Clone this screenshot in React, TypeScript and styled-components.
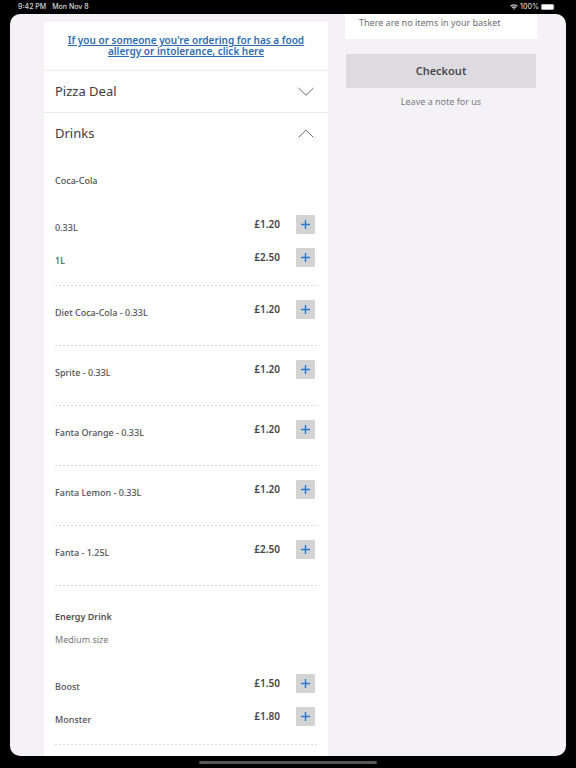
import React from "react";
import styled, { createGlobalStyle } from "styled-components";

const GlobalStyle = createGlobalStyle`
  * { box-sizing: border-box; }
  body { margin: 0; background: #000; color: #505052; font-family: "Noto Sans", "Open Sans", sans-serif; }
  h2, h3, p { margin: 0; font-weight: 400; }
  button { border: 0; padding: 0; font: inherit; color: inherit; background: none; cursor: pointer; }
`;

const Device = styled.div`
  display: grid;
  grid-template-rows: 14px 1fr 12px;
  min-height: 100vh;
  padding: 0 10px;
`;

const StatusBar = styled.header`
  display: flex;
  align-items: center;
  justify-content: space-between;
  padding: 0 10px 0 8px;
  color: #d8d8d8;
  font: 500 7px/14px Inter, sans-serif;
`;

const StatusGroup = styled.div<{ $gap: number }>`
  display: flex;
  align-items: center;
  gap: ${(p) => p.$gap}px;
`;

const Screen = styled.div`
  display: grid;
  grid-template-columns: minmax(0, 1fr) 192px;
  gap: 17px;
  padding: 0 29px 0 34px;
  overflow: hidden;
  border-radius: 10px;
  background: #f4f2f6;
`;

const HomeBar = styled.footer`
  display: flex;
  align-items: center;
  justify-content: center;
  &::after {
    content: "";
    width: 32%;
    height: 3px;
    border-radius: 2px;
    background: #58585a;
  }
`;

const Menu = styled.main`
  margin-top: 8px;
  background: #fff;
`;

const Notice = styled.div`
  padding: 13px 16px;
  text-align: center;
`;

const NoticeLink = styled.a`
  display: block;
  color: #2c6cb0;
  font-size: 10px;
  font-weight: 600;
  line-height: 11px;
  text-decoration: underline;
`;

const Section = styled.section`
  border-top: 1px solid #ebe9ed;
`;

const SectionToggle = styled.button<{ $open?: boolean }>`
  display: flex;
  align-items: center;
  justify-content: space-between;
  width: 100%;
  padding: 10px 14px ${(p) => (p.$open ? 7 : 11)}px 11px;
  color: #3c3c3e;
  font-size: 13px;
  line-height: 20px;
`;

const Products = styled.div`
  padding: 0 11px;
`;

const Product = styled.article<{ $group?: boolean }>`
  padding: ${(p) => (p.$group ? "15px 0 13px" : "14px 0 21px")};
  background: repeating-linear-gradient(90deg, #dcdcdc 0 2px, #fff 2px 4px) bottom / 100% 1px no-repeat;
`;

const ProductTitle = styled.h3<{ $strong?: boolean }>`
  margin-bottom: ${(p) => (p.$strong ? 0 : 18)}px;
  font-size: 9px;
  font-weight: ${(p) => (p.$strong ? 600 : 500)};
  line-height: 32px;
`;

const Description = styled.p`
  margin-bottom: 27px;
  color: #777779;
  font-size: 9px;
  line-height: 14px;
`;

const Rows = styled.div`
  display: grid;
  gap: 8px;
`;

const Row = styled.div`
  display: grid;
  grid-template-columns: minmax(0, 1fr) auto 19px;
  align-items: start;
  column-gap: 16px;
  padding-right: 2px;
`;

const Label = styled.span`
  font-size: 9px;
  font-weight: 500;
  line-height: 25px;
`;

const Price = styled.span`
  color: #454547;
  font-size: 10px;
  font-weight: 600;
  line-height: 19px;
`;

const AddButton = styled.button`
  display: grid;
  place-items: center;
  height: 19px;
  border-radius: 1px;
  background: #d3d3d4;
  color: #2879cc;
`;

const Aside = styled.aside`
  text-align: center;
`;

const Basket = styled.div`
  padding: 0 14px 8px;
  background: #fff;
  color: #6d6d6f;
  font-size: 9px;
  line-height: 17px;
  text-align: left;
`;

const Checkout = styled.button`
  display: block;
  width: calc(100% - 2px);
  margin: 15px 1px 8px;
  background: #dddbdf;
  color: #4b494d;
  font-size: 11px;
  font-weight: 600;
  line-height: 34px;
`;

const NoteButton = styled.button`
  display: block;
  margin: 0 auto;
  color: #7b797e;
  font-size: 9px;
  line-height: 12px;
`;

function Chevron({ up = false }: { up?: boolean }) {
  return (
    <svg width="16" height="9" viewBox="0 0 16 9" fill="none" stroke="#69696b" strokeWidth="1" aria-hidden="true">
      <path d={up ? "M.5 8.500 8 1.200l7.500 7.300" : "M.5 1 8 8.300 15.500 1"} />
    </svg>
  );
}

interface Drink {
  name: string;
  price: string;
}

function DrinkRow({ name, price }: Drink) {
  return (
    <Row>
      <Label>{name}</Label>
      <Price>{price}</Price>
      <AddButton aria-label={`Add ${name}`}>
        <svg width="9" height="9" viewBox="0 0 9 9" stroke="currentColor" strokeWidth="1.4" aria-hidden="true">
          <path d="M4.500 0v9M0 4.500h9" />
        </svg>
      </AddButton>
    </Row>
  );
}

const cola: Drink[] = [
  { name: "0.33L", price: "£1.20" },
  { name: "1L", price: "£2.50" },
];

const singles: Drink[] = [
  { name: "Diet Coca-Cola - 0.33L", price: "£1.20" },
  { name: "Sprite - 0.33L", price: "£1.20" },
  { name: "Fanta Orange - 0.33L", price: "£1.20" },
  { name: "Fanta Lemon - 0.33L", price: "£1.20" },
  { name: "Fanta - 1.25L", price: "£2.50" },
];

const energy: Drink[] = [
  { name: "Boost", price: "£1.50" },
  { name: "Monster", price: "£1.80" },
];

export default function App() {
  return (
    <Device>
      <GlobalStyle />
      <StatusBar>
        <StatusGroup $gap={6}>
          <span>9:42 PM</span>
          <span>Mon Nov 8</span>
        </StatusGroup>
        <StatusGroup $gap={2}>
          <svg width="8" height="6" viewBox="0 0 16 12" fill="none" stroke="currentColor" strokeWidth="2.4" aria-hidden="true">
            <path d="M1 4.500a10 10 0 0 1 14 0M4 7.500a6 6 0 0 1 8 0" />
            <path d="m5.800 9.400 2.200 2.300 2.200-2.300a3.200 3.200 0 0 0-4.400 0Z" fill="currentColor" stroke="none" />
          </svg>
          <span>100%</span>
          <svg width="15" height="6" viewBox="0 0 15 6" aria-hidden="true">
            <rect x=".3" y=".3" width="12.400" height="5.400" rx="1.400" fill="#fff" stroke="#aaa" strokeWidth=".5" />
            <path d="M13.500 2v2q1-1 0-2" fill="#999" />
          </svg>
        </StatusGroup>
      </StatusBar>
      <Screen>
        <Menu>
          <Notice>
            <NoticeLink href="#allergy">
              If you or someone you're ordering for has a food allergy or intolerance, click here
            </NoticeLink>
          </Notice>
          <Section>
            <h2>
              <SectionToggle aria-expanded={false}>
                Pizza Deal <Chevron />
              </SectionToggle>
            </h2>
          </Section>
          <Section>
            <h2>
              <SectionToggle $open aria-expanded>
                Drinks <Chevron up />
              </SectionToggle>
            </h2>
            <Products>
              <Product $group>
                <ProductTitle>Coca-Cola</ProductTitle>
                <Rows>{cola.map((d) => <DrinkRow key={d.name} {...d} />)}</Rows>
              </Product>
              {singles.map((d) => (
                <Product key={d.name}>
                  <DrinkRow {...d} />
                </Product>
              ))}
              <Product $group>
                <ProductTitle $strong>Energy Drink</ProductTitle>
                <Description>Medium size</Description>
                <Rows>{energy.map((d) => <DrinkRow key={d.name} {...d} />)}</Rows>
              </Product>
            </Products>
          </Section>
        </Menu>
        <Aside>
          <Basket>There are no items in your basket</Basket>
          <Checkout>Checkout</Checkout>
          <NoteButton>Leave a note for us</NoteButton>
        </Aside>
      </Screen>
      <HomeBar />
    </Device>
  );
}
